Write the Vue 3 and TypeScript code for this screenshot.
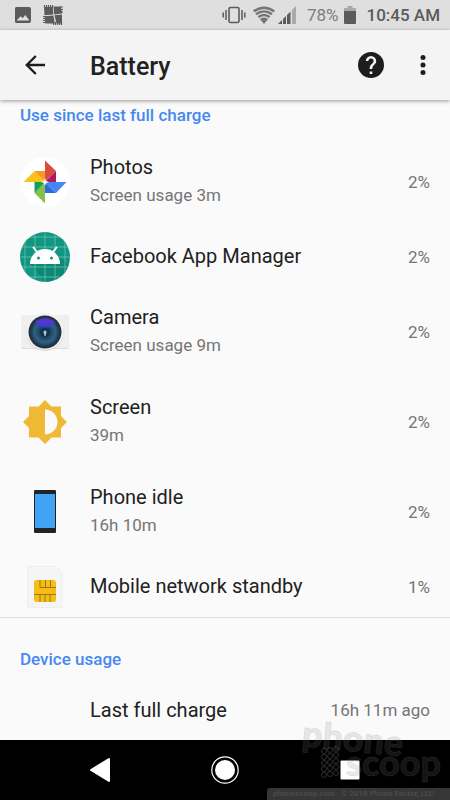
<script setup lang="ts">
type IconName = 'photos' | 'android' | 'camera' | 'screen' | 'phone' | 'sim'

interface UsageItem {
  icon: IconName
  name: string
  detail?: string
  percent: number
}

const items: UsageItem[] = [
  { icon: 'photos', name: 'Photos', detail: 'Screen usage 3m', percent: 2 },
  { icon: 'android', name: 'Facebook App Manager', percent: 2 },
  { icon: 'camera', name: 'Camera', detail: 'Screen usage 9m', percent: 2 },
  { icon: 'screen', name: 'Screen', detail: '39m', percent: 2 },
  { icon: 'phone', name: 'Phone idle', detail: '16h 10m', percent: 2 },
  { icon: 'sim', name: 'Mobile network standby', percent: 1 },
]
</script>

<template>
  <div class="device">
    <div class="status">
      <svg class="status-pic" viewBox="0 0 18 18" aria-hidden="true">
        <path fill="#5b5b5b" fill-rule="evenodd" d="M2 1h13q2 0 2 2v12q0 2-2 2H2q-1 0-1-2V3q0-2 1-2zM2.500 14.500h13l-4.300-5.500-2.500 3.200-2-2z" />
      </svg>
      <svg class="status-app" viewBox="0 0 20 20" aria-hidden="true">
        <path fill="#5b5b5b" d="M1 2h8.700l.7 7.600L1.500 10.300zM10.500 1.500H18l1 7-7.800 1zM1.500 11.200l8.900-.8 1.500 8.100H2.500zM11.500 10.300l7.500-.8v9h-5.500z" />
        <path stroke="#5b5b5b" stroke-width="1.200" d="M1.500 0v3M3.500 0v3M5.500 0v3M7.500 0v3M9.500 0v3M17 2h3M17 4.500h3M17 7h3M0 11.500h3M0 13.500h3M0 15.500h3M0 17.500h3M10.500 17v3M12.500 17v3M14.500 17v3M16.500 17v3M18.500 17v3" />
      </svg>
      <span class="grow"></span>
      <svg class="vibrate" viewBox="0 0 24 18" aria-hidden="true">
        <rect x="7" y="1.500" width="10" height="15" rx="1.500" fill="none" stroke="#5b5b5b" stroke-width="1.600" />
        <path stroke="#5b5b5b" stroke-width="1.500" d="M4 4v10M1.200 6.500v5M20 4v10M22.800 6.500v5" />
      </svg>
      <svg class="wifi" viewBox="0 0 22 18" aria-hidden="true">
        <path fill="#747474" d="M0 4.500Q11-3.500 22 4.500L11 18z" />
        <path fill="none" stroke="#dfdfdf" stroke-width="1.100" d="M1.500 7Q11 .2 20.500 7M3.800 10Q11 4.200 18.200 10M6 12.900Q11 8.800 16 12.900" />
      </svg>
      <svg class="signal" viewBox="0 0 18 18" aria-hidden="true">
        <path fill="#5b5b5b" d="M0 18l4-4v4zM5 13l3-3v8H5zM9 9l3.500-3.500V18H9z" />
        <path fill="#a9a9a9" d="M14 4l4-4v18h-4z" />
      </svg>
      <span class="charge">78%</span>
      <svg class="battery" viewBox="0 0 12 18" aria-hidden="true">
        <path fill="#a9a9a9" d="M1 2h2.500V0h5v2H11q1 0 1 1v3H0V3q0-1 1-1z" />
        <path fill="#5b5b5b" d="M0 5h12v12q0 1-1 1H1q-1 0-1-1z" />
      </svg>
      <time class="clock">10:45 AM</time>
    </div>

    <header class="toolbar">
      <button class="tool back" type="button" aria-label="Back">
        <svg viewBox="0 0 20 20"><path fill="none" stroke="#1d1d1d" stroke-width="2.400" d="M20 10H2M10.800 1L1.800 10l9 9" /></svg>
      </button>
      <h1>Battery</h1>
      <button class="tool help" type="button" aria-label="Help">
        <svg viewBox="0 0 24 24"><path fill="#1d1d1d" d="M12 0a12 12 0 1 0 0 24 12 12 0 0 0 0-24zm1.200 20.400h-2.400V18h2.400zm2.500-9.300-1.100 1.100c-.9.900-1.400 1.600-1.400 3.400h-2.400V15c0-1.300.5-2.500 1.400-3.400l1.500-1.500c.4-.4.700-1 .7-1.700a2.400 2.400 0 0 0-4.800 0H7.200a4.800 4.800 0 0 1 9.600 0c0 1.100-.4 2-1.100 2.700z" /></svg>
      </button>
      <button class="tool more" type="button" aria-label="More options">
        <svg viewBox="0 0 6 20"><g fill="#1d1d1d"><circle cx="3" cy="2.500" r="2.500" /><circle cx="3" cy="10" r="2.500" /><circle cx="3" cy="17.500" r="2.500" /></g></svg>
      </button>
    </header>

    <main>
      <section class="usage">
        <h2>Use since last full charge</h2>
        <ul>
          <li v-for="item in items" :key="item.name" class="row" :class="{ tall: item.detail }">
            <svg class="icon" viewBox="0 0 50 50" aria-hidden="true">
              <g v-if="item.icon === 'photos'">
                <circle cx="25" cy="25" r="25" fill="#fff" />
                <path fill="#db4b3e" d="M25 3.500V25L36 14z" />
                <path fill="#ad1b5f" d="M36 14v11H25z" />
                <path fill="#fcc21b" d="M3.500 25L14.500 14 25 25z" />
                <path fill="#f89b1c" d="M14.500 14H25v11z" />
                <path fill="#4486f4" d="M25 25h21.500L36 36z" />
                <path fill="#346ad7" d="M25 25l11 11H25z" />
                <path fill="#83c14c" d="M25 25v21.500L14.500 36z" />
                <path fill="#119f5c" d="M14.500 25H25L14.500 36z" />
                <path fill="#fff" d="M25 21l1 3 3 1-3 1-1 3-1-3-3-1 3-1z" />
              </g>
              <g v-else-if="item.icon === 'android'">
                <circle cx="25" cy="25" r="25" fill="#109681" />
                <path fill="#09806c" d="M40 26L49 33Q44 49 25 50L11 32z" opacity=".6" />
                <path fill="none" stroke="#6ec2b4" stroke-width=".8" d="M5 10v30M15 2v46M25 0v50M35 2v46M45 10v30M10 5h30M2 15h46M0 25h50M2 35h46M10 45h30" />
                <path fill="#fff" d="M10 32a15 15 0 0 1 30 0z" />
                <path stroke="#fff" stroke-width="2" stroke-linecap="round" d="M13.500 15.500l4 5M36.500 15.500l-4 5" />
                <g fill="#109681"><circle cx="18.500" cy="26" r="1.500" /><circle cx="31.500" cy="26" r="1.500" /></g>
              </g>
              <g v-else-if="item.icon === 'camera'">
                <defs>
                  <radialGradient id="lens"><stop offset="0" stop-color="#65a7bd" /><stop offset=".25" stop-color="#17384f" /><stop offset=".7" stop-color="#2f6285" /><stop offset="1" stop-color="#183247" /></radialGradient>
                  <linearGradient id="glare" x2="0" y2="1"><stop offset="0" stop-color="#6a2cc9" /><stop offset=".5" stop-color="#3843d5" /><stop offset="1" stop-color="#183058" /></linearGradient>
                </defs>
                <rect x="1" y="9" width="48" height="33" rx="1" fill="#ddd" />
                <rect x="1" y="8" width="48" height="33" rx="1" fill="#efefef" />
                <circle cx="25" cy="25.500" r="18.500" fill="#d2d2d2" />
                <circle cx="25" cy="24.500" r="18.500" fill="#f3f3f3" />
                <circle cx="25" cy="25" r="16.500" fill="#26323d" />
                <circle cx="25" cy="25" r="15" fill="url(#lens)" />
                <path fill="url(#glare)" d="M15 15.500A14 14 0 0 1 35 15.500L25 25z" />
                <circle cx="25" cy="25" r="4.500" fill="#102a3f" opacity=".7" />
                <path fill="#9ad0da" d="M23.500 25l1.500-2 1.500 2-1 4h-1z" />
              </g>
              <g v-else-if="item.icon === 'screen'">
                <path fill="#efb936" d="M25 3l6.500 6.500H41V19l6 6-6 6v9.500h-9.500L25 47l-6.500-6.500H9V31l-6-6 6-6V9.500h9.500z" />
                <path fill="#fafafa" d="M25 12.500a12.500 12.500 0 0 1 0 25z" />
              </g>
              <g v-else-if="item.icon === 'phone'">
                <rect x="14" y="3" width="22" height="43" rx="1" fill="#212426" />
                <rect x="15" y="7" width="20" height="34" fill="#42a2f3" />
              </g>
              <g v-else>
                <path fill="#f5f5f5" stroke="#eee" d="M7.500 4.500H36l6 6v35H7.500z" />
                <rect x="14" y="18" width="22" height="22" rx="2.500" fill="#f6bd16" />
                <path fill="none" stroke="#987616" d="M20 18v7.500h16M25.500 18v7M30.500 18v7M14 32.500h22M20 32.500V40M25 32.500V40M30 32.500V40" />
              </g>
            </svg>
            <div class="label">
              <span class="name">{{ item.name }}</span>
              <span v-if="item.detail" class="detail">{{ item.detail }}</span>
            </div>
            <span class="value">{{ item.percent }}%</span>
          </li>
        </ul>
      </section>

      <section class="device-usage">
        <h2>Device usage</h2>
        <div class="row last">
          <span class="name">Last full charge</span>
          <span class="value">16h 11m ago</span>
        </div>
      </section>
    </main>

    <nav class="navbar" aria-label="System navigation">
      <button type="button" aria-label="Back"><svg viewBox="0 0 30 30"><path fill="#fff" stroke="#fff" stroke-width="2" stroke-linejoin="round" d="M6 15l18-11v22z" /></svg></button>
      <button type="button" aria-label="Home"><svg viewBox="0 0 30 30"><circle cx="15" cy="15" r="10" fill="#fff" /><circle cx="15" cy="15" r="13.200" fill="none" stroke="#fff" stroke-width="1.200" /></svg></button>
      <button type="button" aria-label="Recent apps"><svg viewBox="0 0 30 30"><rect x="5.500" y="5.500" width="19" height="19" rx="1" fill="#fff" /></svg></button>
    </nav>

    <svg class="watermark" viewBox="0 0 150 90" aria-hidden="true">
      <g class="brand">
        <text x="1" y="36" transform="rotate(6 1 36)">phone</text>
        <text x="46" y="66">scoop</text>
      </g>
      <g fill="none" stroke="#808080" stroke-opacity=".35">
        <template v-for="r in 5" :key="r">
          <circle v-for="c in 3" :key="c" :cx="18 + c * 6" :cy="36 + r * 6 - c" r="2.500" />
        </template>
      </g>
    </svg>
    <small class="credit">phonescoop.com &nbsp; © 2018 Phone Factor, LLC</small>
  </div>
</template>

<style>
body {
  margin: 0;
  background: #fafafa;
}
</style>

<style scoped>
.device {
  position: relative;
  display: flex;
  flex-direction: column;
  min-height: 100vh;
  background: #fafafa;
  color: #212121;
  font-family: Roboto, "Liberation Sans", sans-serif;
}
h1, h2, ul {
  margin: 0;
  padding: 0;
}
button {
  display: flex;
  align-items: center;
  justify-content: center;
  padding: 0;
  border: 0;
  background: none;
}
.status {
  display: flex;
  align-items: center;
  height: 30px;
  padding: 0 10px 0 14px;
  background: #dfdfdf;
  color: #5b5b5b;
  font-size: 17px;
}
.status-pic { width: 18px; height: 18px; }
.status-app { width: 20px; height: 20px; margin-left: 11px; }
.grow { flex: 1; }
.vibrate { width: 24px; height: 18px; }
.wifi { width: 22px; height: 18px; margin-left: 7px; }
.signal { width: 18px; height: 18px; margin-left: 3px; }
.charge { margin-left: 11px; color: #7d7d7d; }
.battery { width: 12px; height: 18px; margin: 0 11px 0 5px; }
.clock { font-weight: 500; }
.toolbar {
  position: relative;
  display: flex;
  align-items: center;
  height: 70px;
  padding: 0 12px 0 20px;
  background: #f4f4f4;
  box-shadow: 0 1px 4px rgba(0, 0, 0, 0.4);
}
h1 {
  flex: 1;
  padding-top: 3px;
  margin-left: 40px;
  font-size: 25px;
  font-weight: 500;
  line-height: 30px;
}
.tool { height: 40px; }
.back { width: 30px; }
.back svg { width: 20px; height: 20px; }
.help { width: 40px; margin-right: 17px; }
.help svg { width: 26px; height: 26px; }
.more { width: 30px; }
.more svg { width: 6px; height: 20px; }
main { flex: 1; }
h2 {
  color: #4688f1;
  font-size: 17px;
  font-weight: 500;
  line-height: 20px;
}
.usage {
  padding: 5px 20px 0;
  border-bottom: 1px solid #dcdcdc;
}
.usage ul {
  padding-top: 12px;
  list-style: none;
}
.row {
  display: flex;
  align-items: center;
  height: 60px;
}
.tall { height: 90px; }
.icon {
  flex: none;
  width: 50px;
  height: 50px;
  margin-right: 20px;
}
.label {
  display: flex;
  flex: 1;
  flex-direction: column;
  gap: 4px;
  padding-bottom: 3px;
}
.name {
  font-size: 20px;
  line-height: 24px;
}
.detail, .value {
  color: #757575;
  font-size: 17px;
  line-height: 24px;
}
.device-usage { padding: 31px 20px 0; }
.last {
  justify-content: space-between;
  padding-left: 70px;
  margin-top: 11px;
}
.navbar {
  display: flex;
  justify-content: center;
  gap: 65px;
  height: 60px;
  background: #000;
}
.navbar button { width: 60px; }
.navbar svg { width: 30px; height: 30px; }
.watermark {
  position: absolute;
  right: 0;
  bottom: 0;
  width: 150px;
  height: 90px;
  pointer-events: none;
}
.brand {
  fill: rgba(128, 128, 128, 0.16);
  stroke: rgba(128, 128, 128, 0.16);
  font-family: Lato, sans-serif;
  font-size: 36px;
  font-weight: 900;
}
.credit {
  position: absolute;
  right: 0;
  bottom: 0;
  box-sizing: border-box;
  width: 183px;
  height: 12px;
  padding-left: 6px;
  border-radius: 3px 0 0;
  background: #363636;
  color: #4b4b4b;
  font-size: 8px;
  font-weight: 700;
  line-height: 12px;
  white-space: nowrap;
}
</style>
